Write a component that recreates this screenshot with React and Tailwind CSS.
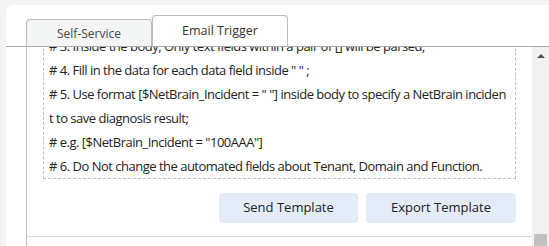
import React from "react";

const lines = [
  "# 3. Inside the body, Only text fields within a pair of [] will be parsed;",
  '# 4. Fill in the data for each data field inside " " ;',
  '# 5. Use format [$NetBrain_Incident = " "] inside body to specify a NetBrain inciden',
  "t to save diagnosis result;",
  '# e.g. [$NetBrain_Incident = "100AAA"]',
  "# 6. Do Not change the automated fields about Tenant, Domain and Function.",
];

export default function App() {
  return (
    <div className="w-[549px] h-[246px] bg-[#f4f4f4] overflow-hidden pt-[5px] pl-[6px] font-['Open_Sans',sans-serif]">
      <div className="bg-white rounded-tl-[8px] h-[241px] pt-[10px] flex flex-col">
        <div className="flex items-end h-[31px] pl-[20px] shrink-0">
          <div className="w-[126px] h-[27px] border border-b-0 border-[#bdbdbd] rounded-t-[4px] bg-[#f4f6f5] flex items-center justify-center text-[12px] text-[#444] pt-[2px]">
            Self-Service
          </div>
          <div className="w-[136px] h-[31px] border border-b-0 border-[#bdbdbd] rounded-t-[4px] bg-white flex items-center justify-center text-[12.5px] text-[#333]">
            Email Trigger
          </div>
        </div>
        <div className="flex flex-1 min-h-0 border-t border-[#acacac]">
          <div className="ml-[20px] flex-1 border-l border-[#bbbbbb] flex flex-col overflow-hidden">
            <div className="mx-[16px] mt-[-14px] border border-dashed border-[#bdbdbd] px-[5px] text-[13px] tracking-[-0.5px] leading-[24px] text-[#222]">
              {lines.map((l, i) => (
                <div key={i} className="whitespace-nowrap">
                  {l}
                </div>
              ))}
            </div>
            <div className="flex justify-end gap-[8px] mr-[16px] mt-[14px]">
              <button className="w-[139px] h-[30px] rounded-[4px] bg-[#e4ecf8] text-[13px] text-[#222]">
                Send Template
              </button>
              <button className="w-[150px] h-[30px] rounded-[4px] bg-[#e4ecf8] text-[13px] text-[#222]">
                Export Template
              </button>
            </div>
            <div className="mt-[13px] border-t border-[#d9d9d9] flex-1" />
          </div>
          <div className="w-[17px] bg-[#f1f1f1] flex flex-col items-center justify-between">
            <div className="mt-[7px] w-0 h-0 border-l-[4px] border-r-[4px] border-b-[4px] border-l-transparent border-r-transparent border-b-[#505050]" />
            <div className="w-[13px] h-[12px] bg-[#c1c1c1]" />
          </div>
        </div>
      </div>
    </div>
  );
}
